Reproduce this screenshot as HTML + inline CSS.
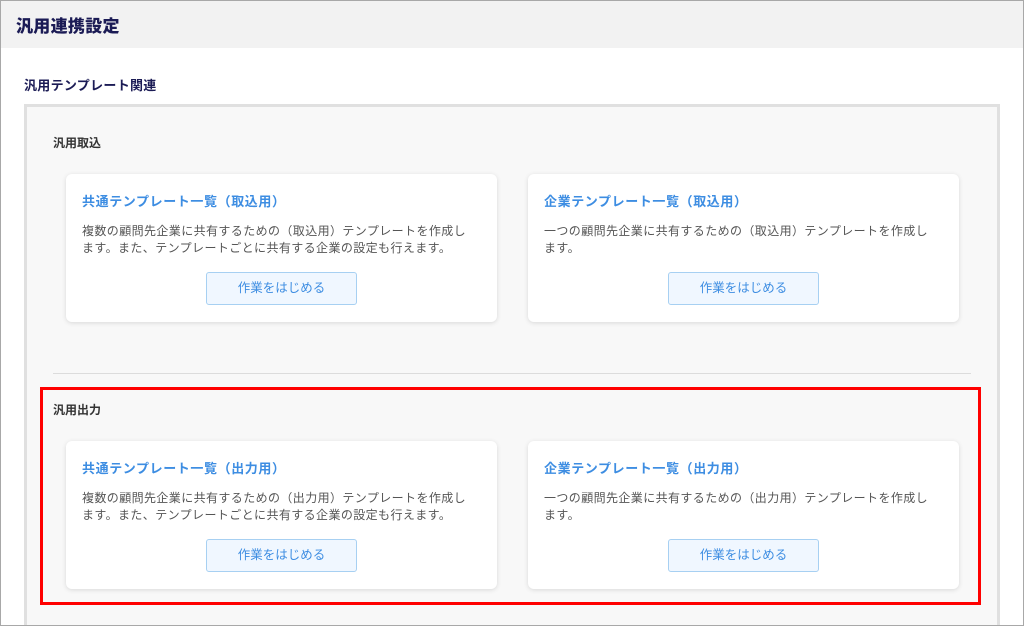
<!DOCTYPE html>
<html><head><meta charset="utf-8"><style>
*{margin:0;padding:0;box-sizing:border-box}
html,body{width:1024px;height:626px;overflow:hidden}
body{background:#fff;font-family:"Liberation Sans","Noto Sans CJK JP",sans-serif;position:relative}
.frame{position:absolute;left:0;top:0;width:1024px;height:626px;border:1px solid #a8a8a8}
.hdr{position:absolute;left:1px;top:1px;width:1022px;height:47px;background:#f2f2f2}
.hdr h1{position:absolute;left:15px;top:11px;font-size:17px;font-weight:900;color:#1b1b55;letter-spacing:.3px}
.sub{position:absolute;left:24px;top:75px;font-size:13px;font-weight:bold;color:#1b1b55;letter-spacing:.3px}
.panel{position:absolute;left:24px;top:104px;width:976px;height:522px;background:#f8f8f8;border:3px solid #e0e0e0;border-bottom:none}
.sec{position:absolute;left:53px;font-size:12px;font-weight:bold;color:#333}
.card{position:absolute;width:431px;height:148px;background:#fff;border-radius:6px;box-shadow:0 1px 5px rgba(0,0,0,.13)}
.card h3{position:absolute;left:16px;top:17px;font-size:13px;font-weight:bold;color:#3d8de2;letter-spacing:.6px}
.card p{position:absolute;left:16px;top:49px;width:392px;font-size:12px;letter-spacing:.4px;line-height:17px;color:#555}
.btn{position:absolute;left:140px;top:98px;width:151px;height:33px;border:1px solid #a7d0f2;background:#f0f7ff;border-radius:3px;color:#3d8de2;font-size:12.5px;text-align:center;line-height:31px}
.div{position:absolute;left:53px;top:373px;width:918px;height:1px;background:#dcdcdc}
.red{position:absolute;left:40px;top:387px;width:941px;height:218px;border:3px solid #f00}
</style></head><body>
<div class="hdr"><h1>汎用連携設定</h1></div>
<div class="sub">汎用テンプレート関連</div>
<div class="panel"></div>
<div class="sec" style="top:134px">汎用取込</div>
<div class="card" style="left:66px;top:174px"><h3>共通テンプレート一覧（取込用）</h3><p>複数の顧問先企業に共有するための（取込用）テンプレートを作成します。また、テンプレートごとに共有する企業の設定も行えます。</p><div class="btn">作業をはじめる</div></div>
<div class="card" style="left:528px;top:174px"><h3>企業テンプレート一覧（取込用）</h3><p>一つの顧問先企業に共有するための（取込用）テンプレートを作成します。</p><div class="btn">作業をはじめる</div></div>
<div class="div"></div>
<div class="sec" style="top:401px">汎用出力</div>
<div class="card" style="left:66px;top:441px"><h3>共通テンプレート一覧（出力用）</h3><p>複数の顧問先企業に共有するための（出力用）テンプレートを作成します。また、テンプレートごとに共有する企業の設定も行えます。</p><div class="btn">作業をはじめる</div></div>
<div class="card" style="left:528px;top:441px"><h3>企業テンプレート一覧（出力用）</h3><p>一つの顧問先企業に共有するための（出力用）テンプレートを作成します。</p><div class="btn">作業をはじめる</div></div>
<div class="red"></div>
<div class="frame"></div>
</body></html>
